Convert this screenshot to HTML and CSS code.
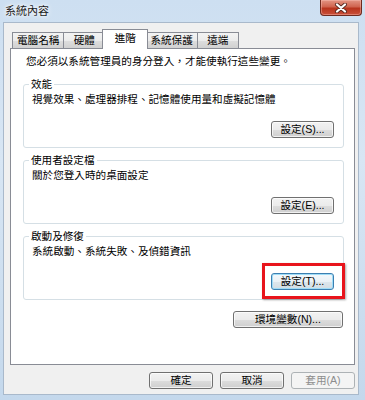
FILE: index.html
```html
<!DOCTYPE html>
<html lang="zh-Hant">
<head>
  <meta charset="UTF-8" />
  <title>系統內容</title>
  <link rel="stylesheet" href="styles.css">
</head>
<body>

  <div class="window">
    <div class="titlebar">
      <span class="title">系統內容</span>
      <div class="close-btn">
        <svg width="14" height="10" viewBox="0 0 14 10">
          <path d="M3 1.5 L11 8.5 M11 1.5 L3 8.5" stroke="#5a2a22" stroke-width="4" stroke-linecap="round" fill="none" />
          <path d="M3 1.5 L11 8.5 M11 1.5 L3 8.5" stroke="#fff" stroke-width="2.2" stroke-linecap="round" fill="none" />
        </svg>
      </div>
    </div>

    <div class="face">
      <div class="tabs">
        <div class="tab">電腦名稱</div>
        <div class="tab">硬體</div>
        <div class="tab active">進階</div>
        <div class="tab">系統保護</div>
        <div class="tab">遠端</div>
      </div>

      <div class="panel">
        <p class="intro">您必須以系統管理員的身分登入，才能使執行這些變更。</p>

        <!-- 效能 -->
        <fieldset class="group">
          <legend>效能</legend>
          <p class="desc">視覺效果、處理器排程、記憶體使用量和虛擬記憶體</p>
          <div class="group-actions">
            <button class="btn">設定(S)...</button>
          </div>
        </fieldset>

        <!-- 使用者設定檔 -->
        <fieldset class="group">
          <legend>使用者設定檔</legend>
          <p class="desc">關於您登入時的桌面設定</p>
          <div class="group-actions">
            <button class="btn">設定(E)...</button>
          </div>
        </fieldset>

        <!-- 啟動及修復 -->
        <fieldset class="group">
          <legend>啟動及修復</legend>
          <p class="desc">系統啟動、系統失敗、及偵錯資訊</p>
          <div class="group-actions">
            <span class="mark">
              <button class="btn default">設定(T)...</button>
              <span class="mark-box"></span>
            </span>
          </div>
        </fieldset>

        <div class="env-row">
          <button class="btn wide">環境變數(N)...</button>
        </div>
      </div>

      <div class="footer">
        <button class="btn">確定</button>
        <button class="btn">取消</button>
        <button class="btn" disabled>套用(A)</button>
      </div>
    </div>
  </div>

</body>
</html>
```

FILE: styles.css
```css
body {
  margin: 0;
  padding: 0;
  font-family: "Liberation Sans", "Noto Sans CJK TC", sans-serif;
  font-size: 10.6px;
  color: #000;
}

.window {
  width: 365px;
  height: 400px;
  display: flex;
  flex-direction: column;
  background: linear-gradient(180deg, #cddff1 0%, #d8e6f4 40%, #c4d8ec 100%);
  box-sizing: border-box;
}

.titlebar {
  height: 22px;
  display: flex;
  justify-content: space-between;
  align-items: flex-start;
  padding: 0 3px 0 5px;
  flex-shrink: 0;
}

.title {
  font-size: 11px;
  line-height: 23px;
  color: #1a1a1a;
  text-shadow: 0 0 6px #fff, 0 0 3px #fff;
}

.close-btn {
  width: 42px;
  height: 16px;
  box-sizing: border-box;
  border: 1px solid #6e2a1f;
  border-top: none;
  border-radius: 0 0 4px 4px;
  background: linear-gradient(180deg, #e39584 0%, #d0644f 45%, #b8341d 55%, #c9503a 100%);
  box-shadow: inset 0 0 0 1px rgba(255, 200, 190, 0.4);
  display: flex;
  align-items: center;
  justify-content: center;
}

.face {
  flex: 1;
  margin: 0 6px 5px 3px;
  background-color: #f0f0f0;
  border: 1px solid #a9b9cb;
  display: flex;
  flex-direction: column;
  padding: 6px 3px 0 6px;
}

.tabs {
  display: flex;
  align-items: flex-end;
  height: 20px;
  padding-left: 2px;
  margin-bottom: -1px;
}

.tab {
  height: 17px;
  min-width: 42px;
  padding: 0 4px;
  box-sizing: border-box;
  border: 1px solid #898c95;
  border-bottom: none;
  margin-left: -1px;
  text-align: center;
  line-height: 15px;
  background: linear-gradient(180deg, #f3f3f3 0%, #ebebeb 50%, #dddddd 51%, #cfcfcf 100%);
}

.tab:first-child {
  margin-left: 0;
}

.tab.active {
  height: 20px;
  min-width: 46px;
  margin: 0 -2px 0 -3px;
  padding: 0 6px;
  background: #fff;
  position: relative;
  z-index: 1;
  line-height: 16px;
}

.panel {
  flex: 1;
  background-color: #fff;
  border: 1px solid #898c95;
  padding: 5px 10px 0 12px;
}

.intro {
  margin: 0 0 9px 3px;
  line-height: 14px;
}

.group {
  margin: 0 0 5px 0;
  padding: 0 9px 9px 8px;
  border: 1px solid #d5dfe5;
  border-radius: 3px;
}

.group legend {
  padding: 0 2px;
  margin-left: -3px;
  line-height: 14px;
}

.desc {
  margin: 1px 0 0 0;
  line-height: 14px;
}

.group-actions {
  display: flex;
  justify-content: flex-end;
  margin-top: 15px;
}

.btn {
  width: 63px;
  height: 17px;
  padding: 0;
  font-family: "Liberation Sans", "Noto Sans CJK TC", sans-serif;
  font-size: 10.6px;
  line-height: 15px;
  color: #000;
  border: 1px solid #707070;
  border-radius: 3px;
  background: linear-gradient(180deg, #f2f2f2 0%, #ebebeb 50%, #dddddd 51%, #cfcfcf 100%);
  box-shadow: inset 0 0 0 1px rgba(255, 255, 255, 0.7);
}

.btn.default {
  border-color: #3c7fb1;
  box-shadow: inset 0 0 0 1px #9fdcf7;
  background: linear-gradient(180deg, #f4f8fb 0%, #eaf1f6 50%, #dde6ec 51%, #d3dde4 100%);
}

.btn.wide {
  width: 110px;
}

.btn:disabled {
  color: #8d8d8d;
  border-color: #adb2b5;
  background: #f4f4f4;
  box-shadow: none;
}

.mark {
  position: relative;
  display: inline-block;
}

.mark .btn {
  display: block;
}

.mark-box {
  position: absolute;
  top: -10px;
  bottom: -9px;
  left: -9px;
  right: -11px;
  border: 3px solid #e8141c;
  box-shadow: 1px 1px 2px rgba(0, 0, 0, 0.35);
}

.env-row {
  display: flex;
  justify-content: flex-end;
  margin-top: 11px;
  padding-right: 1px;
}

.footer {
  display: flex;
  justify-content: flex-end;
  gap: 7px;
  padding: 7px 0 5px;
}

.footer .btn {
  width: 64px;
}
```
